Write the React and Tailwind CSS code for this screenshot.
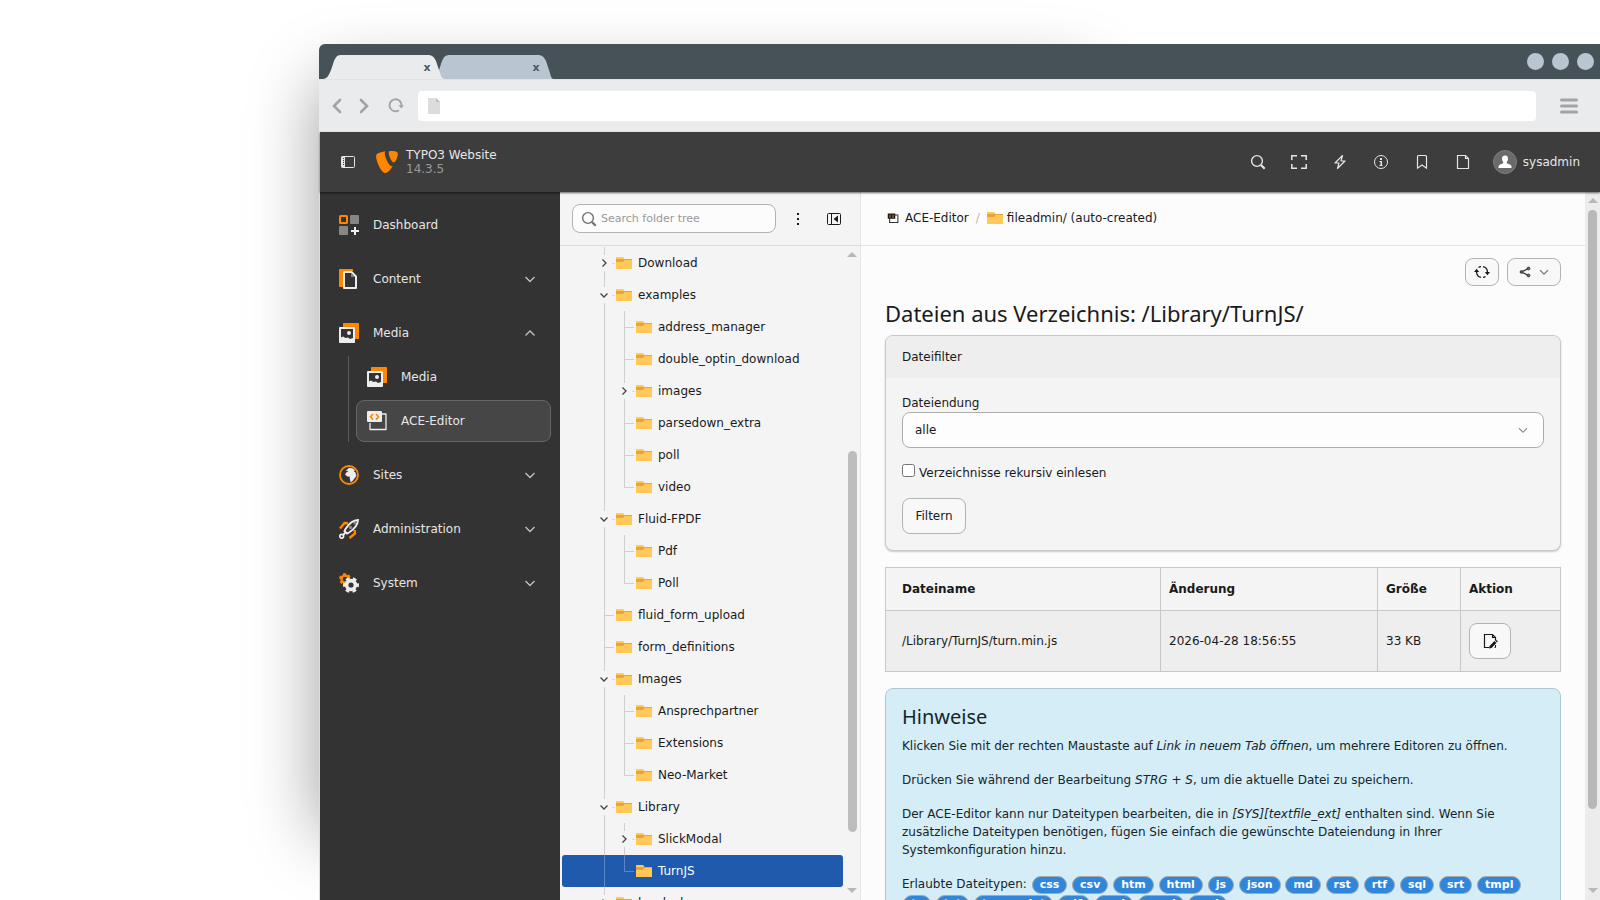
import React from "react";
import { SiTypo3 } from "react-icons/si";

const treeRows = [
  { name: "Download", level: 1, toggle: "closed" },
  { name: "examples", level: 1, toggle: "open" },
  { name: "address_manager", level: 2 },
  { name: "double_optin_download", level: 2 },
  { name: "images", level: 2, toggle: "closed" },
  { name: "parsedown_extra", level: 2 },
  { name: "poll", level: 2 },
  { name: "video", level: 2, last: true },
  { name: "Fluid-FPDF", level: 1, toggle: "open" },
  { name: "Pdf", level: 2 },
  { name: "Poll", level: 2, last: true },
  { name: "fluid_form_upload", level: 1 },
  { name: "form_definitions", level: 1 },
  { name: "Images", level: 1, toggle: "open" },
  { name: "Ansprechpartner", level: 2 },
  { name: "Extensions", level: 2 },
  { name: "Neo-Market", level: 2, last: true },
  { name: "Library", level: 1, toggle: "open" },
  { name: "SlickModal", level: 2, toggle: "closed" },
  { name: "TurnJS", level: 2, last: true, selected: true },
  { name: "localcal", level: 1, toggle: "closed" },
];

const fileTypes = [
  "css", "csv", "htm", "html", "js", "json", "md", "rst", "rtf", "sql", "srt", "tmpl",
  "ts", "txt", "typoscript", "xlf", "xml", "yaml", "yml",
];

function Svg({ className = "size-4", children, ...rest }) {
  return (
    <svg viewBox="0 0 16 16" fill="none" aria-hidden="true" className={`shrink-0 ${className}`} {...rest}>
      {children}
    </svg>
  );
}

function Chevron({ dir = "down", className = "size-4" }) {
  const d = {
    down: "M3.5 6 8 10.5 12.5 6",
    up: "M3.5 10.5 8 6l4.5 4.5",
    right: "M6 3.5 10.5 8 6 12.5",
  };
  return (
    <Svg className={className}>
      <path d={d[dir]} stroke="currentColor" strokeWidth="1.3" />
    </Svg>
  );
}

function FolderIcon() {
  return (
    <Svg>
      <path fill="#ffc857" d="M0 14V2.6c0-.3.3-.6.6-.6h6.1c.3 0 .5.1.7.3L8.5 4H16v10z" />
      <path fill="#e8a33d" d="M16 4v1H8.4L7.2 6.7c-.1.2-.3.3-.5.3H0V4z" />
    </Svg>
  );
}

function SearchIcon({ className }) {
  return (
    <Svg className={className} stroke="currentColor">
      <circle cx="7" cy="7" r="5.4" strokeWidth="1.4" />
      <path d="m11 11 3.7 3.7" strokeWidth="2.2" />
    </Svg>
  );
}

function DashboardIcon() {
  return (
    <svg viewBox="0 0 20 20" className="size-5" aria-hidden="true">
      <rect x="1" y="1" width="7" height="7" fill="none" stroke="#ff8700" strokeWidth="2" rx=".5" />
      <rect x="11" width="9" height="9" rx="1" fill="#868686" />
      <rect y="11" width="9" height="9" rx="1" fill="#868686" />
      <path d="M15 12h2v3h3v2h-3v3h-2v-3h-3v-2h3z" fill="#f0f0f0" />
    </svg>
  );
}

function ContentIcon() {
  return (
    <svg viewBox="0 0 20 20" className="size-5" aria-hidden="true">
      <path d="M1 0h12c.6 0 1 .4 1 1v1H4v16H1c-.6 0-1-.4-1-1V1c0-.6.4-1 1-1z" fill="#ff8700" />
      <path d="M5 3h7.500L17 7.500V19H5z" fill="#333" stroke="#ededed" strokeWidth="2" strokeLinejoin="round" />
      <path d="M12 4v4h4z" fill="#868686" />
    </svg>
  );
}

function MediaIcon() {
  return (
    <svg viewBox="0 0 20 20" className="size-5" aria-hidden="true">
      <path d="M5 0h14c.6 0 1 .4 1 1v14c0 .6-.4 1-1 1h-3V5c0-.6-.4-1-1-1H4V1c0-.6.4-1 1-1z" fill="#ff8700" />
      <path
        d="M1 4h14c.6 0 1 .4 1 1v14c0 .6-.4 1-1 1H1c-.6 0-1-.4-1-1V5c0-.6.4-1 1-1zm1 2v8.500l2-1 2.500 1.500L9 14.500l2 1.500 3-1V6z"
        fill="#ededed"
        fillRule="evenodd"
      />
      <circle cx="10" cy="10" r="2" fill="#ededed" />
    </svg>
  );
}

function AceIcon() {
  return (
    <svg viewBox="0 0 20 20" className="size-5" aria-hidden="true">
      <path d="M15 3h4v15.500H3V12" fill="none" stroke="#ededed" strokeWidth="1.300" strokeLinejoin="round" />
      <rect y="0" width="15" height="11" rx="1" fill="#ededed" />
      <path d="M6 3 3.500 5.800 6 8.600M9 3l2.500 2.800L9 8.600" fill="none" stroke="#ff8700" strokeWidth="1.600" />
    </svg>
  );
}

function SitesIcon() {
  return (
    <svg viewBox="0 0 20 20" className="size-5" aria-hidden="true">
      <circle cx="10" cy="10" r="9" fill="none" stroke="#ff8700" strokeWidth="1.800" />
      <path
        d="M9.500 3.200c2.500-.6 5 .2 6.500 2l-1.200 1 1.700 1.300.9 3.500-1.900 2.500-2.200 2.800-1.600.9-1-3.600.2-1.800-2.500-.4L6 9.600l1.200-2.200 2-.8-1-.9-1.600.3z"
        fill="#ededed"
      />
    </svg>
  );
}

function RocketIcon() {
  return (
    <svg viewBox="0 0 20 20" className="size-5" aria-hidden="true" fill="none">
      <path d="M1 9.500 5.500 4l3.500.300M10.500 19l5.500-4.500-.300-3.500" stroke="#ff8700" strokeWidth="2.400" />
      <path d="M19 1c-5 .3-9 3.500-12.500 9l-1 2 2.500 2.500 2-1C15.500 10 18.700 6 19 1z" fill="#333" stroke="#ededed" strokeWidth="1.900" />
      <circle cx="11.500" cy="8.500" r="1.800" fill="#868686" />
      <path d="m13.500 3.500 3 3L18 2z" fill="#868686" />
      <circle cx="2.700" cy="17.300" r="1.900" stroke="#ededed" strokeWidth="1.700" />
      <path d="m4 16 3-3" stroke="#ededed" strokeWidth="2" />
    </svg>
  );
}

function SystemIcon() {
  return (
    <svg viewBox="0 0 20 20" className="size-5" aria-hidden="true" fill="none">
      <circle cx="6" cy="6" r="3.500" stroke="#ff8700" strokeWidth="2.400" />
      <circle cx="6" cy="6" r="5" stroke="#ff8700" strokeWidth="2" strokeDasharray="2.620 2.620" />
      <circle cx="12" cy="12" r="6" fill="#333" />
      <circle cx="12" cy="12" r="4.400" stroke="#ededed" strokeWidth="3.600" />
      <circle cx="12" cy="12" r="6.900" stroke="#ededed" strokeWidth="2.200" strokeDasharray="3.900 3.325" strokeDashoffset="1.950" />
    </svg>
  );
}

const modules = [
  { label: "Dashboard", icon: <DashboardIcon /> },
  { label: "Content", icon: <ContentIcon />, dir: "down" },
  {
    label: "Media",
    icon: <MediaIcon />,
    dir: "up",
    children: [
      { label: "Media", icon: <MediaIcon /> },
      { label: "ACE-Editor", icon: <AceIcon />, active: true },
    ],
  },
  { label: "Sites", icon: <SitesIcon />, dir: "down" },
  { label: "Administration", icon: <RocketIcon />, dir: "down" },
  { label: "System", icon: <SystemIcon />, dir: "down" },
];

function BrowserTabs() {
  return (
    <div className="flex h-[35px] items-end rounded-tl-md bg-[#465257] pl-px">
      <div className="relative h-6 w-[234px]">
        <svg viewBox="0 0 234 24" className="absolute inset-0 size-full" aria-hidden="true">
          <path d="M112 24c4 0 5-3 7-9l3-9c2-4 3-6 8-6h88c4 0 6 2 8 6l3 9c2 6 2 9 5 9z" fill="#b9c5d1" />
          <path d="M3 24c4 0 6-4 8-9l3-9c2-4 3-6 7-6h87c4 0 6 2 8 6l3 9c2 6 3 9 6 9z" fill="#e9ebed" />
        </svg>
        <div className="relative flex h-full items-center pl-[103px] text-[11px] font-bold text-[#4a5a66]">
          <button type="button" aria-label="Close tab" className="w-2 leading-none">
            x
          </button>
          <button type="button" aria-label="Close tab" className="ml-[101px] w-2 leading-none">
            x
          </button>
        </div>
      </div>
      <div className="ml-auto flex gap-2 self-center pr-[6px]">
        <span className="size-[17px] rounded-full bg-[#b9c5d1]" />
        <span className="size-[17px] rounded-full bg-[#b9c5d1]" />
        <span className="size-[17px] rounded-full bg-[#b9c5d1]" />
      </div>
    </div>
  );
}

function BrowserBar() {
  return (
    <div className="flex h-[53px] items-center border-t border-[#dfe3e4] bg-[#e9ebed] pr-[22px] pl-[13px] text-[#a3a3a3]">
      <button type="button" aria-label="Back">
        <svg viewBox="0 0 10 16" className="h-4 w-[10px]" fill="none" stroke="currentColor" strokeWidth="2.600" strokeLinecap="round">
          <path d="M8 2 2 8l6 6" />
        </svg>
      </button>
      <button type="button" aria-label="Forward" className="ml-[17px]">
        <svg viewBox="0 0 10 16" className="h-4 w-[10px]" fill="none" stroke="currentColor" strokeWidth="2.600" strokeLinecap="round">
          <path d="m2 2 6 6-6 6" />
        </svg>
      </button>
      <button type="button" aria-label="Reload" className="ml-[19px]">
        <svg viewBox="0 0 16 16" className="size-4" fill="none" stroke="currentColor" strokeWidth="1.900">
          <path d="M11 12.200A6 6 0 1 1 13.500 8" />
          <path d="M10.500 7.200h5.500L13.300 10.500z" fill="currentColor" stroke="none" />
        </svg>
      </button>
      <div className="ml-[14px] flex h-[30px] flex-1 items-center gap-2 rounded bg-white pl-[10px]">
        <svg viewBox="0 0 12 16" className="h-4 w-3" aria-hidden="true">
          <path d="M0 0h8l4 4v12H0z" fill="#dcdcdc" />
          <path d="M8 0v4h4z" fill="#bdbdbd" />
        </svg>
        <input aria-label="Address" className="min-w-0 flex-1 outline-none" />
      </div>
      <button type="button" aria-label="Menu" className="ml-6">
        <svg viewBox="0 0 18 16" className="h-4 w-[18px]" stroke="currentColor" strokeWidth="3" strokeLinecap="round">
          <path d="M1.500 2h15M1.500 8h15M1.500 14h15" />
        </svg>
      </button>
    </div>
  );
}

function ToolbarButton({ label, children }) {
  return (
    <button type="button" aria-label={label}>
      {children}
    </button>
  );
}

function Topbar() {
  return (
    <header className="relative z-10 flex h-[60px] items-center bg-[#3d3d3d] pr-5 pl-5 text-[#e6e6e6] shadow-[0_1px_2px_rgba(0,0,0,0.6)]">
      <ToolbarButton label="Toggle module menu">
        <Svg>
          <rect x="1.500" y="2.500" width="13" height="11" rx="1" stroke="currentColor" />
          <path d="M1.500 2.500H5v11H1.500z" fill="currentColor" />
          <path d="M3.500 4v8" stroke="#3d3d3d" strokeDasharray="1 1" />
        </Svg>
      </ToolbarButton>
      <a href="#typo3" className="ml-5 flex items-center gap-2">
        <SiTypo3 className="size-[22px] text-[#ff8700]" />
        <span className="leading-[14px]">
          TYPO3 Website
          <span className="block text-[#999]">14.3.5</span>
        </span>
      </a>
      <div className="ml-auto flex items-center gap-[25px]">
        <ToolbarButton label="Search">
          <SearchIcon />
        </ToolbarButton>
        <ToolbarButton label="Fullscreen">
          <Svg stroke="currentColor" strokeWidth="1.500">
            <path d="M.8 6V1.800H6M10 1.800h5.200V6M15.200 10v4.200H10M6 14.200H.8V10" />
          </Svg>
        </ToolbarButton>
        <ToolbarButton label="Clear cache">
          <Svg stroke="currentColor" strokeWidth="1.200" strokeLinejoin="round">
            <path d="M10.500 1.500 3 9h4l-1.500 5.500L13 7H9z" />
          </Svg>
        </ToolbarButton>
        <ToolbarButton label="System information">
          <Svg stroke="currentColor">
            <circle cx="8" cy="8" r="6.500" />
            <path d="M8 4v2" strokeWidth="2" />
            <path d="M6.500 7.500H8V11M6.500 11.500h3" strokeWidth="1" />
            <path d="M8.500 7v5" strokeWidth="1" />
          </Svg>
        </ToolbarButton>
        <ToolbarButton label="Bookmarks">
          <Svg stroke="currentColor" strokeWidth="1.200">
            <path d="M3.500 14.200V2.500c0-.6.4-1 1-1h7c.6 0 1 .4 1 1v11.700L8 11z" />
          </Svg>
        </ToolbarButton>
        <ToolbarButton label="Open documents">
          <Svg stroke="currentColor" strokeWidth="1.200">
            <path d="M2.500 1.500h8l3 3v10h-11zM10.500 1.500v3h3" />
          </Svg>
        </ToolbarButton>
      </div>
      <button type="button" className="ml-[22px] flex items-center gap-[6px]">
        <span className="flex size-6 items-center justify-center rounded-full border border-[#7d7d7d] bg-[#6a6a6a]">
          <Svg fill="#fff">
            <path fill="#fff" d="M8 1.500c2 0 3 1.200 3 3.200 0 1.300-.5 2.300-1.200 3v1.500l3.500 1.600c.8.400 1.200 1 1.200 1.800V14h-13v-1.400c0-.8.400-1.400 1.200-1.800l3.500-1.600V7.700C5.500 7 5 6 5 4.700c0-2 1-3.200 3-3.200z" />
          </Svg>
        </span>
        sysadmin
      </button>
    </header>
  );
}

function ModuleButton({ item }) {
  return (
    <button
      type="button"
      className={`flex h-[42px] w-full items-center gap-[14px] rounded-lg border px-[10px] text-left ${
        item.active ? "border-[#666] bg-[#464646]" : "border-transparent"
      }`}
    >
      {item.icon}
      {item.label}
      {item.dir && (
        <span className="ml-auto flex w-5 justify-center text-[#c4c4c4]">
          <Chevron dir={item.dir} />
        </span>
      )}
    </button>
  );
}

function Sidebar() {
  return (
    <nav className="w-60 shrink-0 space-y-3 bg-[#333] pt-3 pr-[9px] pl-2 text-[#e6e6e6]">
      {modules.map((m) => (
        <div key={m.label}>
          <ModuleButton item={m} />
          {m.children && (
            <div className="mt-[2px] ml-5 space-y-[2px] border-l border-[#5c5c5c] pl-[7px]">
              {m.children.map((c) => (
                <ModuleButton key={c.label} item={c} />
              ))}
            </div>
          )}
        </div>
      ))}
    </nav>
  );
}

// connector lines and toggle in front of a folder
function Guides({ row }) {
  const x = row.level === 1 ? 6.5 : 26.5;
  const bottom = row.last ? 16.5 : 32;
  return (
    <svg
      className={`h-8 shrink-0 ${row.level === 1 ? "w-[18px]" : "w-[38px]"}`}
      viewBox={`0 0 ${row.level === 1 ? 18 : 38} 32`}
      fill="none"
      stroke={row.selected ? "#5c87c4" : "#cfcfcf"}
      aria-hidden="true"
    >
      {row.level === 2 && <path d="M6.500 0v32" />}
      {row.toggle ? (
        <path d={`M${x} 0v8M${x} 24v8M${x + 8} 16.5h2`} />
      ) : (
        <path d={`M${x} 0V${bottom}M${x} 16.5h9.500`} />
      )}
      {row.toggle === "open" && <path d={`M${x - 4} 14.500l3.500 3.500 3.500-3.500`} stroke="#444" strokeWidth="1.300" />}
      {row.toggle === "closed" && <path d={`M${x - 2} 12.500l3.500 3.500-3.500 3.500`} stroke="#444" strokeWidth="1.300" />}
    </svg>
  );
}

function Arrow({ up }) {
  return (
    <svg viewBox="0 0 10 5" className="h-[5px] w-[10px] shrink-0" fill="#b8b8b8" aria-hidden="true">
      <path d={up ? "M5 0l5 5H0z" : "M0 0h10L5 5z"} />
    </svg>
  );
}

function FolderTree() {
  return (
    <aside className="flex w-[301px] shrink-0 flex-col border-r border-[#e4e4e4] bg-[#f4f4f4]">
      <div className="flex h-[54px] shrink-0 items-center border-b border-[#dcdcdc] pl-3">
        <label className="flex h-[29px] w-[204px] shrink-0 items-center gap-1 rounded-lg border border-[#b3b3b3] bg-[#fcfcfc] px-2">
          <SearchIcon className="size-4 text-[#707070]" />
          <input
            type="search"
            aria-label="Search folder tree"
            placeholder="Search folder tree"
            className="w-full min-w-0 text-[11px] outline-none placeholder:text-[#999]"
          />
        </label>
        <button type="button" aria-label="Tree options" className="ml-[14px] text-[#1a1a1a]">
          <Svg fill="currentColor">
            <path fill="currentColor" d="M7 2h2v2H7zM7 7h2v2H7zM7 12h2v2H7z" />
          </Svg>
        </button>
        <button type="button" aria-label="Collapse tree" className="ml-5 text-[#1a1a1a]">
          <Svg>
            <rect x="1.500" y="2.500" width="13" height="11" rx="1" stroke="currentColor" />
            <path d="M5.500 2.500v11" stroke="currentColor" />
            <path d="M12 4.500v7L7.500 8z" fill="currentColor" />
          </Svg>
        </button>
      </div>
      <div className="flex min-h-0 flex-1">
        <ul className="min-w-0 flex-1 overflow-hidden pt-px pl-[2px] text-[#1a1a1a]">
          {treeRows.map((row) => (
            <li
              key={row.name}
              className={`flex h-8 items-center rounded-[3px] pl-9 ${row.selected ? "bg-[#1f5aac] text-white" : ""}`}
            >
              <Guides row={row} />
              <FolderIcon />
              <span className="ml-[6px]">{row.name}</span>
            </li>
          ))}
        </ul>
        <div className="flex w-[17px] shrink-0 flex-col items-center pt-[6px] pb-[7px] pl-px">
          <Arrow up />
          <div className="flex min-h-0 w-[9px] flex-1 flex-col">
            <div className="flex-[194]" />
            <div className="flex-[381] rounded-full bg-[#bdbdbd]" />
            <div className="flex-[56]" />
          </div>
          <Arrow />
        </div>
      </div>
    </aside>
  );
}

function FilterPanel() {
  return (
    <form
      className="overflow-hidden rounded-lg border border-[#c8c8c8] bg-[#f4f4f4] shadow-[0_1px_2px_rgba(0,0,0,0.2)]"
      onSubmit={(e) => e.preventDefault()}
    >
      <div className="bg-[#eee] px-4 py-3">Dateifilter</div>
      <div className="space-y-4 p-4">
        <div>
          <label className="block" htmlFor="extension">
            Dateiendung
          </label>
          <div className="relative">
            <select
              id="extension"
              className="block h-9 w-full appearance-none rounded-lg border border-[#adadad] bg-[#fdfdfd] px-3"
            >
              <option>alle</option>
              {fileTypes.map((t) => (
                <option key={t}>{t}</option>
              ))}
            </select>
            <span className="pointer-events-none absolute inset-y-0 right-[14px] flex items-center text-[#8f8f8f]">
              <Chevron className="size-[14px]" />
            </span>
          </div>
        </div>
        <label className="flex items-start gap-1">
          <input type="checkbox" className="size-[13px]" />
          Verzeichnisse rekursiv einlesen
        </label>
        <button type="submit" className="block h-9 min-w-16 rounded-lg border border-[#b3b3b3] bg-[#f8f8f8] px-3">
          Filtern
        </button>
      </div>
    </form>
  );
}

function FileTable() {
  const cell = "border border-[#c8c8c8] py-3 pr-2";
  return (
    <table className="mt-4 w-full border-collapse text-left">
      <thead className="bg-[#f4f4f4]">
        <tr>
          <th className={`${cell} w-[275px] pl-4`}>Dateiname</th>
          <th className={`${cell} w-[217px] pl-2`}>Änderung</th>
          <th className={`${cell} w-[83px] pl-2`}>Größe</th>
          <th className={`${cell} pl-2`}>Aktion</th>
        </tr>
      </thead>
      <tbody className="bg-[#eee]">
        <tr>
          <td className={`${cell} pl-4`}>/Library/TurnJS/turn.min.js</td>
          <td className={`${cell} pl-2`}>2026-04-28 18:56:55</td>
          <td className={`${cell} pl-2`}>33 KB</td>
          <td className={`${cell} pl-2`}>
            <button
              type="button"
              aria-label="Bearbeiten"
              className="flex h-9 w-[42px] items-center justify-center rounded-lg border border-[#b3b3b3] bg-[#f8f8f8]"
            >
              <Svg>
                <path d="M7 14.500H2.500v-13h8l3 3V7M10.500 1.500v3h3" stroke="currentColor" strokeWidth="1.200" />
                <path d="M12.500 14.500h1V12" stroke="currentColor" />
                <path d="m7 15.500.6-2.600 4.800-4.800 2 2-4.800 4.800zM13 7.500l.9-.9 2 2-.9.900z" fill="currentColor" />
              </Svg>
            </button>
          </td>
        </tr>
      </tbody>
    </table>
  );
}

function Hints() {
  return (
    <section className="mt-4 rounded-lg border border-[#adc8d2] bg-[#d5edf6] p-4 text-[#14262d]">
      <h2 className="mb-2 font-['Noto_Sans',sans-serif] text-xl leading-6">Hinweise</h2>
      <div className="space-y-4">
        <p>
          Klicken Sie mit der rechten Maustaste auf <em>Link in neuem Tab öffnen</em>, um mehrere Editoren zu öffnen.
        </p>
        <p>
          Drücken Sie während der Bearbeitung <em>STRG + S</em>, um die aktuelle Datei zu speichern.
        </p>
        <p>
          Der ACE-Editor kann nur Dateitypen bearbeiten, die in <em>[SYS][textfile_ext]</em> enthalten sind. Wenn Sie
          zusätzliche Dateitypen benötigen, fügen Sie einfach die gewünschte Dateiendung in Ihrer Systemkonfiguration
          hinzu.
        </p>
        <p>
          Erlaubte Dateitypen:{" "}
          {fileTypes.map((t) => (
            <React.Fragment key={t}>
              <span className="ml-px inline-block rounded-full border border-[#a8a8a8] bg-[#2f86db] px-[7px] text-[11px] leading-4 font-bold text-white">
                {t}
              </span>{" "}
            </React.Fragment>
          ))}
        </p>
      </div>
    </section>
  );
}

function Content() {
  return (
    <div className="flex min-w-0 flex-1 bg-[#fcfcfc] text-[#1a1a1a]">
      <div className="flex min-w-0 flex-1 flex-col">
        <div className="flex h-[54px] shrink-0 items-center border-b border-[#e4e4e4] px-6 pb-[2px]">
          <svg viewBox="0 0 16 16" className="ml-[2px] size-3 shrink-0" aria-hidden="true">
            <path d="M9 4h5.500v10H3.500V8" fill="none" stroke="#333" strokeWidth="1.400" />
            <path d="M1 2h10v7H1z" fill="#1a1a1a" />
            <path d="M3 3.500h2v4H3zM7 3.500h2v4H7z" fill="#a85900" />
          </svg>
          <a href="#ace" className="ml-[6px]">
            ACE-Editor
          </a>
          <span className="mx-[7px] text-[#bbb]">/</span>
          <a href="#fileadmin" className="flex items-center gap-1">
            <FolderIcon />
            fileadmin/ (auto-created)
          </a>
        </div>
        <main className="min-h-0 flex-1 overflow-hidden px-6 pt-3">
          <div className="flex justify-end gap-2">
            <button
              type="button"
              aria-label="Neu laden"
              className="flex h-7 w-[34px] items-center justify-center rounded-lg border border-[#b3b3b3] bg-[#f8f8f8]"
            >
              <Svg stroke="currentColor" strokeWidth="1.300">
                <path d="M4.500 3.500A5.500 5.500 0 0 1 7 2.600M9 2.600a5.500 5.500 0 0 1 4.400 5.400M2.600 8A5.500 5.500 0 0 0 7 13.400M9 13.400a5.500 5.500 0 0 0 2.500-.9" />
                <path d="M10.800 8H16l-2.600 3.300zM0 8h5.200L2.600 4.700z" fill="currentColor" stroke="none" />
              </Svg>
            </button>
            <button
              type="button"
              aria-label="Teilen"
              className="flex h-7 w-[54px] items-center justify-center gap-[5px] rounded-lg border border-[#b3b3b3] bg-[#f8f8f8]"
            >
              <Svg stroke="#333" className="size-[14px]">
                <path d="m12 4-8 4 8 4" strokeWidth="1.300" />
                <circle cx="12" cy="4" r="1.600" fill="#666" />
                <circle cx="12" cy="12" r="1.600" fill="#666" />
                <circle cx="4" cy="8" r="1.600" fill="#666" />
              </Svg>
              <span className="text-[#777]">
                <Chevron className="size-[14px]" />
              </span>
            </button>
          </div>
          <h1 className="mt-[15px] mb-[9px] font-['Noto_Sans',sans-serif] text-[22px] leading-[25px]">
            Dateien aus Verzeichnis: /Library/TurnJS/
          </h1>
          <FilterPanel />
          <FileTable />
          <Hints />
        </main>
      </div>
      <div className="flex w-[15px] shrink-0 flex-col items-center bg-[#ececec] pt-[6px] pb-[7px]">
        <Arrow up />
        <div className="flex min-h-0 w-[9px] flex-1 flex-col">
          <div className="flex-[7]" />
          <div className="flex-[599] rounded-full bg-[#b8b8b8]" />
          <div className="flex-[79]" />
        </div>
        <Arrow />
      </div>
    </div>
  );
}

export default function App() {
  return (
    <div className="relative flex h-screen overflow-hidden bg-white pt-11 pl-80 font-['DejaVu_Sans',sans-serif] text-xs leading-[18px]">
      <div className="absolute top-20 bottom-16 left-80 w-[770px] rounded-2xl shadow-[0_0_70px_rgba(0,0,0,0.4)]" />
      <div className="relative -ml-px flex min-w-0 flex-1 flex-col">
        <BrowserTabs />
        <BrowserBar />
        <div className="flex min-h-0 flex-1 flex-col border-l border-[#dadcdd]">
          <Topbar />
          <div className="flex min-h-0 flex-1">
            <Sidebar />
            <FolderTree />
            <Content />
          </div>
        </div>
      </div>
    </div>
  );
}
